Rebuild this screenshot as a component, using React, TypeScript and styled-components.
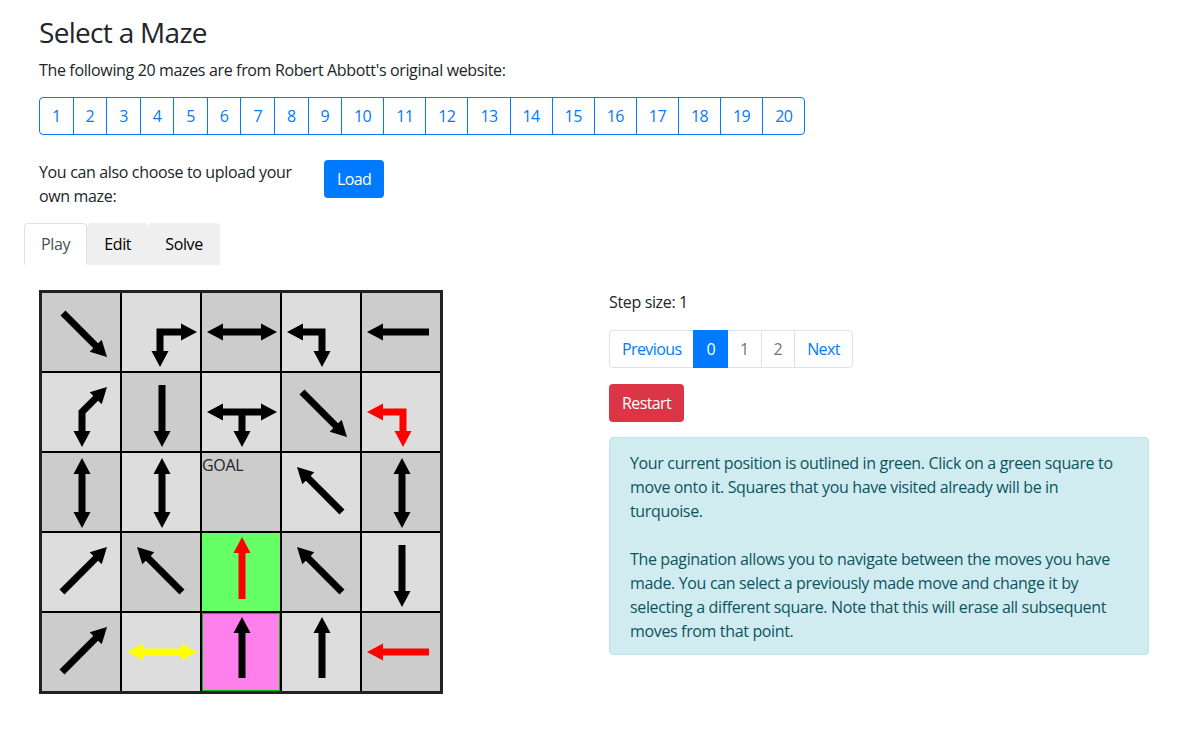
import React from "react";
import styled, { createGlobalStyle } from "styled-components";

const GlobalStyle = createGlobalStyle`
  *, *::before, *::after { box-sizing: border-box; }
  html, body { margin: 0; padding: 0; background: #fff; }
  body {
    font-family: "Segoe UI", "Open Sans", sans-serif;
    font-size: 16px;
    line-height: 1.5;
    letter-spacing: -0.35px;
    color: #212529;
  }
`;

const Page = styled.div`
  width: 1140px;
  margin-left: 24px;
  padding-top: 16px;
`;

const Section = styled.div`
  padding: 0 15px;
`;

const Title = styled.h3`
  margin: 0 0 8px;
  font-size: 28px;
  font-weight: 500;
  line-height: 1.2;
  letter-spacing: -0.7px;
`;

const Lead = styled.p`
  margin: 0 0 15px;
`;

const Pager = styled.ul<{ $mb?: number }>`
  display: flex;
  list-style: none;
  margin: 0 0 ${(p) => p.$mb ?? 16}px;
  padding: 0;
  letter-spacing: -0.6px;
`;

const PageItem = styled.li<{ $border: string; $color: string; $active?: boolean }>`
  margin-left: -1px;
  padding: 8px 12px;
  line-height: 20px;
  border: 1px solid ${(p) => (p.$active ? "#007bff" : p.$border)};
  background: ${(p) => (p.$active ? "#007bff" : "#fff")};
  color: ${(p) => (p.$active ? "#fff" : p.$color)};
  position: relative;
  z-index: ${(p) => (p.$active ? 1 : 0)};
  &:first-child {
    margin-left: 0;
    border-radius: 4px 0 0 4px;
  }
  &:last-child {
    border-radius: 0 4px 4px 0;
  }
`;

const UploadRow = styled.div`
  display: grid;
  grid-template-columns: 285px 285px;
  margin: 0 -15px 15px;
`;

const Col = styled.div`
  padding: 0 15px;
`;

const Note = styled.p`
  margin: 0;
`;

const Button = styled.button<{ $variant: "primary" | "danger" }>`
  font: inherit;
  letter-spacing: -0.6px;
  line-height: 24px;
  padding: 6px 12px;
  border: 1px solid transparent;
  border-radius: 4px;
  color: #fff;
  background: ${(p) => (p.$variant === "primary" ? "#007bff" : "#dc3545")};
  cursor: pointer;
`;

const TabList = styled.div`
  display: flex;
  margin-bottom: 25px;
`;

const Tab = styled.div<{ $active?: boolean }>`
  padding: 8px 16px;
  line-height: 24px;
  border: 1px solid ${(p) => (p.$active ? "#dee2e6" : "#efefef")};
  border-bottom-color: ${(p) => (p.$active ? "#fff" : "#efefef")};
  border-radius: 4px 4px 0 0;
  background: ${(p) => (p.$active ? "#fff" : "#efefef")};
  color: ${(p) => (p.$active ? "#495057" : "#000")};
`;

const PlayArea = styled.div`
  display: grid;
  grid-template-columns: 570px 570px;
`;

const Board = styled.div`
  display: grid;
  grid-template-columns: repeat(5, 78px);
  grid-auto-rows: 78px;
  gap: 2px;
  width: 404px;
  background: #000;
  border: 3px solid #222;
`;

const tones: Record<string, string> = {
  dark: "#cccccc",
  light: "#dddddd",
  green: "#66ff66",
  pink: "#ff80ec",
};

const Cell = styled.div<{ $tone: string; $outlined?: boolean }>`
  background: ${(p) => tones[p.$tone]};
  box-shadow: ${(p) => (p.$outlined ? "inset 0 0 0 1px #00c000" : "none")};
  line-height: 24px;
  color: #212529;
  svg { display: block; }
`;

const StepText = styled.p`
  margin: 0 0 16px;
`;

const Info = styled.div`
  margin-top: 15px;
  padding: 13px 20px 11px;
  background: #d1ecf1;
  border: 1px solid #bee5eb;
  border-radius: 4px;
  color: #0c5460;
  p { margin: 0; }
  p + p { margin-top: 24px; }
`;

type Pt = [number, number];
type Seg = { pts: Pt[]; start?: boolean; end?: boolean };

const HL = 16;
const HW = 8.5;
const SW = 7;

function unit(a: Pt, b: Pt): Pt {
  const dx = b[0] - a[0];
  const dy = b[1] - a[1];
  const l = Math.hypot(dx, dy);
  return [dx / l, dy / l];
}

function head(tip: Pt, from: Pt) {
  const u = unit(from, tip);
  const bx = tip[0] - u[0] * HL;
  const by = tip[1] - u[1] * HL;
  const n: Pt = [-u[1], u[0]];
  return `${tip[0]},${tip[1]} ${bx + n[0] * HW},${by + n[1] * HW} ${bx - n[0] * HW},${by - n[1] * HW}`;
}

const Arrow: React.FC<{ segs: Seg[]; color: string }> = ({ segs, color }) => (
  <svg width="78" height="78" viewBox="0 0 78 78">
    {segs.map((s, i) => {
      const pts = s.pts.map((p) => [...p] as Pt);
      const last = pts.length - 1;
      if (s.end) {
        const u = unit(pts[last - 1], pts[last]);
        pts[last] = [pts[last][0] - u[0] * (HL - 2), pts[last][1] - u[1] * (HL - 2)];
      }
      if (s.start) {
        const u = unit(pts[1], pts[0]);
        pts[0] = [pts[0][0] - u[0] * (HL - 2), pts[0][1] - u[1] * (HL - 2)];
      }
      return (
        <g key={i} fill={color}>
          <polyline
            points={pts.map((p) => p.join(",")).join(" ")}
            fill="none"
            stroke={color}
            strokeWidth={SW}
            strokeLinejoin="miter"
            strokeLinecap="butt"
          />
          {s.end && <polygon points={head(s.pts[last], s.pts[last - 1])} />}
          {s.start && <polygon points={head(s.pts[0], s.pts[1])} />}
        </g>
      );
    })}
  </svg>
);

type CellDef = { tone: string; segs?: Seg[]; color?: string; goal?: boolean; outlined?: boolean };

const DR: Seg[] = [{ pts: [[21, 20], [65, 64]], end: true }];
const UL: Seg[] = [{ pts: [[60, 59], [15, 14]], end: true }];
const UR: Seg[] = [{ pts: [[20, 59], [65, 14]], end: true }];
const VV: Seg[] = [{ pts: [[40, 5], [40, 75]], start: true, end: true }];
const HH: Seg[] = [{ pts: [[5, 39], [75, 39]], start: true, end: true }];
const DOWN: Seg[] = [{ pts: [[40, 12], [40, 74]], end: true }];
const UP: Seg[] = [{ pts: [[40, 65], [40, 4]], end: true }];
const LEFT: Seg[] = [{ pts: [[67, 39], [5, 39]], end: true }];

const maze: CellDef[][] = [
  [
    { tone: "dark", segs: DR },
    { tone: "light", segs: [{ pts: [[38, 74], [38, 39], [75, 39]], start: true, end: true }] },
    { tone: "dark", segs: HH },
    { tone: "light", segs: [{ pts: [[5, 39], [40, 39], [40, 74]], start: true, end: true }] },
    { tone: "dark", segs: LEFT },
  ],
  [
    { tone: "light", segs: [{ pts: [[40, 74], [40, 39], [65, 14]], start: true, end: true }] },
    { tone: "dark", segs: DOWN },
    {
      tone: "light",
      segs: [
        { pts: [[5, 39], [75, 39]], start: true, end: true },
        { pts: [[40, 39], [40, 74]], end: true },
      ],
    },
    { tone: "dark", segs: [{ pts: [[20, 19], [65, 64]], end: true }] },
    { tone: "light", color: "#ff0000", segs: [{ pts: [[5, 39], [41, 39], [41, 74]], start: true, end: true }] },
  ],
  [
    { tone: "dark", segs: VV },
    { tone: "light", segs: VV },
    { tone: "dark", goal: true },
    { tone: "light", segs: UL },
    { tone: "dark", segs: VV },
  ],
  [
    { tone: "light", segs: UR },
    { tone: "dark", segs: UL },
    { tone: "green", color: "#ff0000", segs: [{ pts: [[40, 66], [40, 4]], end: true }] },
    { tone: "dark", segs: UL },
    { tone: "light", segs: DOWN },
  ],
  [
    { tone: "dark", segs: UR },
    { tone: "light", color: "#ffff00", segs: HH },
    { tone: "pink", outlined: true, segs: UP },
    { tone: "light", segs: UP },
    { tone: "dark", color: "#ff0000", segs: LEFT },
  ],
];

const mazeNumbers = Array.from({ length: 20 }, (_, i) => i + 1);

export default function App() {
  return (
    <>
      <GlobalStyle />
      <Page>
        <Section>
          <Title>Select a Maze</Title>
          <Lead>The following 20 mazes are from Robert Abbott's original website:</Lead>
          <Pager $mb={25}>
            {mazeNumbers.map((n) => (
              <PageItem key={n} $border="#007bff" $color="#007bff">
                {n}
              </PageItem>
            ))}
          </Pager>
          <UploadRow>
            <Col>
              <Note>You can also choose to upload your own maze:</Note>
            </Col>
            <Col>
              <Button $variant="primary">Load</Button>
            </Col>
          </UploadRow>
        </Section>
        <TabList>
          <Tab $active>Play</Tab>
          <Tab>Edit</Tab>
          <Tab>Solve</Tab>
        </TabList>
        <PlayArea>
          <Col>
            <Board>
              {maze.flat().map((c, i) => (
                <Cell key={i} $tone={c.tone} $outlined={c.outlined}>
                  {c.goal ? "GOAL" : c.segs && <Arrow segs={c.segs} color={c.color ?? "#000"} />}
                </Cell>
              ))}
            </Board>
          </Col>
          <Col>
            <StepText>Step size: 1</StepText>
            <Pager>
              <PageItem $border="#dee2e6" $color="#007bff">Previous</PageItem>
              <PageItem $border="#dee2e6" $color="#007bff" $active>0</PageItem>
              <PageItem $border="#dee2e6" $color="#6c757d">1</PageItem>
              <PageItem $border="#dee2e6" $color="#6c757d">2</PageItem>
              <PageItem $border="#dee2e6" $color="#007bff">Next</PageItem>
            </Pager>
            <Button $variant="danger">Restart</Button>
            <Info>
              <p>
                Your current position is outlined in green. Click on a green square to move onto it. Squares
                that you have visited already will be in turquoise.
              </p>
              <p>
                The pagination allows you to navigate between the moves you have made. You can select a
                previously made move and change it by selecting a different square. Note that this will erase
                all subsequent moves from that point.
              </p>
            </Info>
          </Col>
        </PlayArea>
      </Page>
    </>
  );
}
